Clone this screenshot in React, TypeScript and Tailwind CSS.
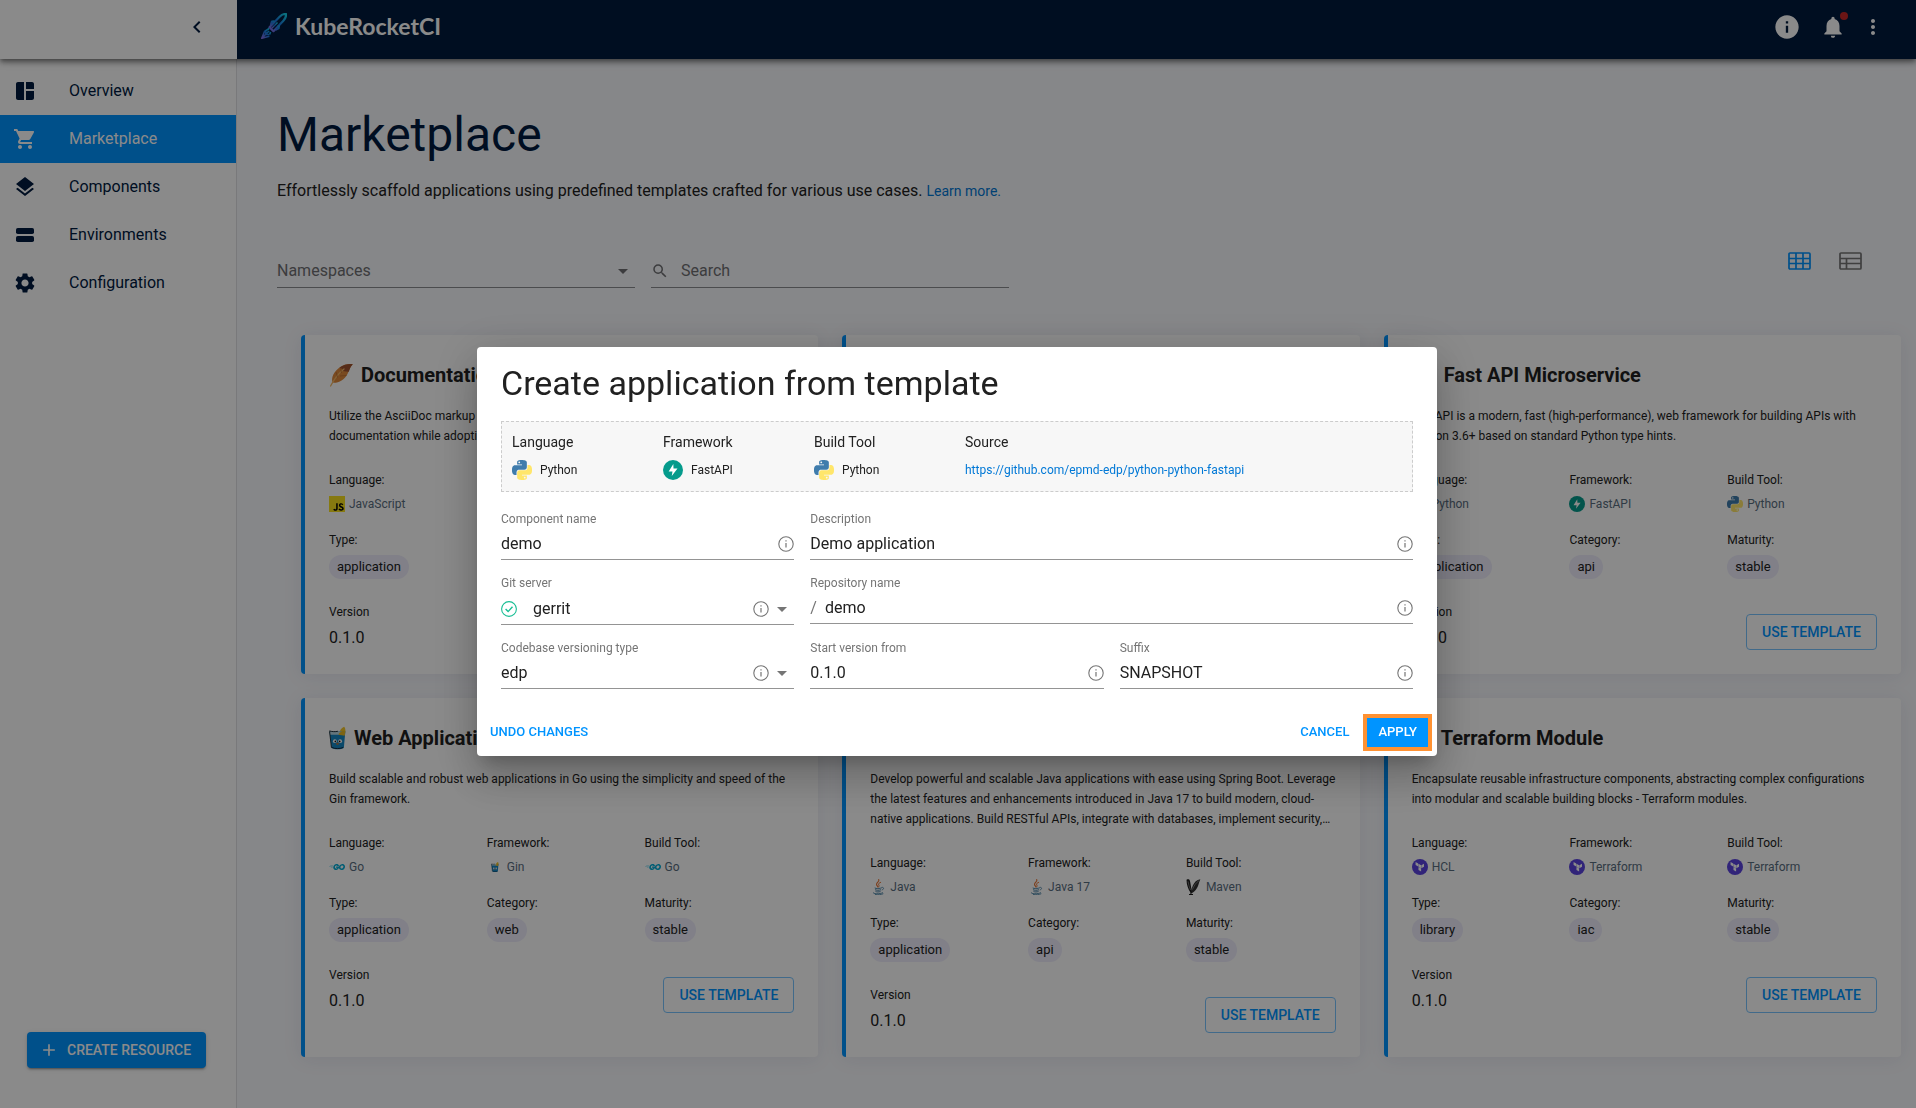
import React from 'react';
import {
  MdAdd,
  MdArrowDropDown,
  MdChevronLeft,
  MdInfo,
  MdLayers,
  MdMoreVert,
  MdNotifications,
  MdSearch,
  MdSettings,
  MdShoppingCart,
  MdSpaceDashboard,
} from 'react-icons/md';
import { SiGo, SiJavascript, SiTerraform } from 'react-icons/si';

/* ---------- drawings ---------- */

const PYTHON_HALF =
  'M14.25.18l.9.2.73.26.59.3.45.32.34.34.25.34.16.33.1.3.04.26.02.2-.01.13V8.5l-.05.63-.13.55-.21.46-.26.38-.3.31-.33.25-.35.19-.35.14-.33.1-.3.07-.26.04-.21.02H8.77l-.69.05-.59.14-.5.22-.41.27-.33.32-.27.35-.2.36-.15.37-.1.35-.07.32-.04.27-.02.21v3.06H3.17l-.21-.03-.28-.07-.32-.12-.35-.18-.36-.26-.36-.36-.35-.46-.32-.59-.28-.73-.21-.88-.14-1.05-.05-1.23.06-1.22.16-1.04.24-.87.32-.71.36-.57.4-.44.42-.33.42-.24.4-.16.36-.1.32-.05.24-.01h.16l.06.01h8.16v-.83H6.18l-.01-2.75-.02-.37.05-.34.11-.31.17-.28.25-.26.31-.23.38-.2.44-.18.51-.15.58-.12.64-.1.71-.06.77-.04.84-.02 1.27.05zm-6.3 1.98l-.23.33-.08.41.08.41.23.34.33.22.41.09.41-.09.33-.22.23-.34.08-.41-.08-.41-.23-.33-.33-.22-.41-.09-.41.09z';

type IconProps = { className?: string };

function PythonIcon({ className = 'size-4' }: IconProps) {
  return (
    <svg viewBox="0 0 24 24" className={className} aria-hidden="true">
      <path d={PYTHON_HALF} fill="#3f7cac" />
      <path d={PYTHON_HALF} fill="#ffe66b" transform="rotate(180 12 12)" />
    </svg>
  );
}

function FastApiIcon({ className = 'size-4' }: IconProps) {
  return (
    <svg viewBox="0 0 24 24" className={className} aria-hidden="true">
      <circle cx="12" cy="12" r="12" fill="#059b8c" />
      <path d="M12.4 4.8 6.8 13.8h4.6l-.9 5.4 6.9-9H12.6z" fill="#fff" />
    </svg>
  );
}

function TerraformIcon({ className = 'size-4' }: IconProps) {
  return (
    <span className={`${className} flex items-center justify-center rounded-full bg-[#5b44e0] text-white`}>
      <SiTerraform className="size-3/5" />
    </span>
  );
}

function JavaScriptIcon({ className = 'size-4' }: IconProps) {
  return (
    <span className={`${className} flex bg-black text-[#f7df1e]`}>
      <SiJavascript className="size-full" />
    </span>
  );
}

function GoIcon({ className = 'size-4' }: IconProps) {
  return <SiGo className={`${className} text-[#00acd7]`} />;
}

function JavaIcon({ className = 'size-4' }: IconProps) {
  return (
    <svg viewBox="0 0 24 24" className={className} fill="none" strokeLinecap="round" aria-hidden="true">
      <path d="M13 1c2 3-4.500 4.600-3 8 .4 1 1.500 1.800 2 3" stroke="#e76f2c" strokeWidth="1.600" />
      <path d="M16 5c-2.500 1-4 2.200-2.800 4 .6 1 .5 2-.4 3" stroke="#e76f2c" strokeWidth="1.400" />
      <path d="M7 13.500c-1.500.8 7 1.300 10 0M8 16.300c1.500.9 5.500.9 8 0M8.800 18.900c1.500.8 4.500.7 6.400 0" stroke="#4f86a8" strokeWidth="1.500" />
      <path d="M18 12.500c3-.8 3.600 2.800.2 4" stroke="#4f86a8" strokeWidth="1.300" />
      <path d="M5 20.500c-3 1.500 10 2.600 14 .2M8 23.300c4 .6 9 .2 11.500-1" stroke="#4f86a8" strokeWidth="1.300" />
    </svg>
  );
}

function MavenIcon({ className = 'size-4' }: IconProps) {
  return (
    <svg viewBox="0 0 24 24" className={className} aria-hidden="true">
      <path d="M.8 1.200C3 0 5 .4 5.800 2.500c1.200 4 1.400 8.500 2.600 13.500L6.800 20.500C3 15 .8 8 .8 1.200z" fill="#1c1c1c" />
      <path d="M21.500.4C16 1 12.500 5 10.500 9.500c-1.200 3-2.300 6-3.500 9.500l1 2.500c5-2 9-7.500 10.500-12.500 1-3 1.800-6 3-8.600z" fill="#303030" />
      <path d="M9.500 16C12 10 15 5.500 19.500 2.500M3 3.500c.6 4.500 2 8.500 3.800 13" stroke="#9a9a9a" strokeWidth="1" fill="none" />
      <path d="M7.400 18v5.300M4.500 23.300h6" stroke="#1c1c1c" strokeWidth="1.600" fill="none" />
    </svg>
  );
}

function GinIcon({ className = 'size-4' }: IconProps) {
  return (
    <svg viewBox="0 0 18 24" className={className} aria-hidden="true">
      <path d="M11 6.500C11.500 3 13.500 1 16 0c1.600 1.500 1.800 5 .8 7.500z" fill="#f3c62b" />
      <path d="M.5 5h16.800l-1.600 17.500c-3 1.800-10 1.800-13 0z" fill="#1687c4" />
      <path d="M.5 5h16.800l-.4 3.500H.9z" fill="#b9d9e6" />
      <path d="M.4 4.500c3 .9 6 1 9 .4M.6 5l2 17.300" stroke="#1d2b33" strokeWidth="1" fill="none" />
      <path d="M10 8.500C11 6 14 4 17.200 4.500l-.5 5z" fill="#e8b923" />
      <circle cx="6.200" cy="15.400" r="2" fill="#fff" />
      <circle cx="11.800" cy="15.400" r="2" fill="#fff" />
      <circle cx="6.700" cy="15.600" r=".9" fill="#111" />
      <circle cx="11.300" cy="15.600" r=".9" fill="#111" />
      <ellipse cx="9" cy="18.200" rx="1.600" ry="1.100" fill="#a3744a" />
      <path d="M3 22c3 1.600 9 1.600 12 0" stroke="#123" strokeWidth="1" fill="none" />
    </svg>
  );
}

function GinSmallIcon() {
  return (
    <span className="flex size-4 items-center justify-center">
      <GinIcon className="h-2.5 w-2" />
    </span>
  );
}

function FeatherIcon({ className = 'size-4' }: IconProps) {
  return (
    <svg viewBox="0 0 24 24" className={className} aria-hidden="true">
      <path d="M23.800 1.200C21 .4 15 1 10.500 4.500 4.500 9 2.600 14 3.200 18.500l1.300 1.300C10 20 15.500 16.500 18.500 11c1.800-3.200 2.200-6.800 5.300-9.800z" fill="#e08a3c" />
      <path d="M23.800 1.200C21 .4 15 1 10.500 4.500l3.200 1.700-1 1.600 3.800.6 3.300.4c1-2.800 1.700-5.300 4-7.600z" fill="#a0522f" />
      <path d="M15 6C10 10 6 14.500 1.600 23" stroke="#f1b868" strokeWidth="1.300" fill="none" strokeLinecap="round" />
      <path d="M11.500 5l1 5M7 9l1.600 5.500M17.500 12.500l-6.500.5" stroke="#b8692f" strokeWidth=".7" fill="none" />
    </svg>
  );
}

function RocketLogo() {
  return (
    <svg viewBox="0 0 26 26" className="size-[26px]" aria-hidden="true">
      <defs>
        <linearGradient id="rocket" x1="1" y1="0" x2="0" y2="1">
          <stop offset="0" stopColor="#12d3ea" />
          <stop offset=".5" stopColor="#1d78e0" />
          <stop offset="1" stopColor="#8b6fe8" />
        </linearGradient>
      </defs>
      <g stroke="url(#rocket)" fill="none" strokeLinejoin="round">
        <path d="M25 1c.3 2.600-.6 4.600-2.600 6.700L12.500 18.200l-4-4L18.600 3.800C20.600 1.700 22.600.8 25 1z" strokeWidth="2.200" />
        <path d="M16.500 9.500l-5.700 5.800" strokeWidth="1.500" />
        <path d="M13.500 8.500l-2.500.2-1 3.300M17.700 12.500l-.2 2.700-3 1.500" strokeWidth="2.400" />
        <path d="M8.200 15.500l-4.700 3L.8 25.200l7.600-2M9.500 19l-.8 2.600M1.500 24.500l6.500-6.500M4.800 18.500v3h3.500" strokeWidth="1.600" />
      </g>
    </svg>
  );
}

function EnvironmentsIcon({ className }: IconProps) {
  return (
    <svg viewBox="0 0 24 24" className={className} fill="currentColor" aria-hidden="true">
      <rect x="3" y="5" width="18" height="6" rx="1.800" />
      <rect x="3" y="13" width="18" height="6" rx="1.800" />
    </svg>
  );
}

function InfoOutline() {
  return (
    <svg viewBox="0 0 16 16" className="size-4 shrink-0 text-[#757575]" fill="none" stroke="currentColor" role="img" aria-label="Info">
      <circle cx="8" cy="8" r="7.200" strokeWidth="1.100" />
      <path d="M8 7v4.600M8 4.300v1.300" strokeWidth="1.200" />
    </svg>
  );
}

function CheckOutline() {
  return (
    <svg viewBox="0 0 16 16" className="size-4 shrink-0 text-[#18be94]" fill="none" stroke="currentColor" role="img" aria-label="Connected">
      <circle cx="8" cy="8" r="7.400" strokeWidth="1.100" />
      <path d="M4.600 8l2.500 2.600 4.400-4.800" strokeWidth="1.400" />
    </svg>
  );
}

function GridViewIcon() {
  return (
    <svg viewBox="0 0 23 18" className="h-[18px] w-[23px]" fill="none" stroke="currentColor" strokeWidth="1.700" aria-hidden="true">
      <rect x="1" y="1" width="21" height="16" rx="1" />
      <path d="M1 6.500h21M1 11.500h21M8 1v16M15 1v16" />
    </svg>
  );
}

function ListViewIcon() {
  return (
    <svg viewBox="0 0 23 18" className="h-[18px] w-[23px]" fill="none" stroke="currentColor" strokeWidth="1.700" aria-hidden="true">
      <rect x="1" y="1" width="21" height="16" rx="1" />
      <path d="M1 6.500h21M1 11.500h21M7.500 6.500V17" />
    </svg>
  );
}

/* ---------- page chrome ---------- */

function TopBar() {
  return (
    <header className="relative z-10 flex h-[59px] shrink-0 bg-white shadow-[0_2px_4px_-1px_rgba(0,0,0,0.3),0_4px_5px_rgba(0,0,0,0.24),0_1px_10px_rgba(0,0,0,0.22)]">
      <div className="flex w-[237px] shrink-0 items-center justify-end pr-7 pb-1.5 text-[#001a3f]">
        <button type="button" aria-label="Collapse menu">
          <MdChevronLeft className="size-6" />
        </button>
      </div>
      <div className="flex flex-1 items-center justify-between bg-[#001a3d] pr-[31px] pb-1.5 pl-6">
        <a href="#home" className="flex items-center gap-2 pb-0.5 font-['Lato'] text-[23px] leading-7 font-bold text-white">
          <RocketLogo />
          KubeRocketCI
        </a>
        <div className="flex items-center text-white">
          <button type="button" aria-label="Information" className="mr-[19px]">
            <MdInfo className="size-7" />
          </button>
          <button type="button" aria-label="Notifications" className="relative mr-[15px]">
            <MdNotifications className="size-[26px]" />
            <span className="absolute -top-0.5 -right-0.5 size-2 rounded-full bg-[#c62828]" />
          </button>
          <button type="button" aria-label="More">
            <MdMoreVert className="size-6" />
          </button>
        </div>
      </div>
    </header>
  );
}

const navItems = [
  { label: 'Overview', Icon: MdSpaceDashboard },
  { label: 'Marketplace', Icon: MdShoppingCart, active: true },
  { label: 'Components', Icon: MdLayers },
  { label: 'Environments', Icon: EnvironmentsIcon },
  { label: 'Configuration', Icon: MdSettings },
];

function Sidebar() {
  return (
    <aside className="flex w-[237px] shrink-0 flex-col justify-between border-r border-[#e0e0e4] bg-white pt-2 pb-10">
      <nav>
        {navItems.map(({ label, Icon, active }) => (
          <a
            key={label}
            href={`#${label.toLowerCase()}`}
            aria-current={active ? 'page' : undefined}
            className={`flex h-12 items-center gap-8 pl-[13px] text-base ${active ? 'bg-[#0094ff] text-white' : 'text-[#001a3f]'}`}
          >
            <Icon className="size-6" />
            {label}
          </a>
        ))}
      </nav>
      <button
        type="button"
        className="mr-[30px] ml-[27px] flex h-9 items-center gap-2 rounded bg-[#0094ff] pl-3 text-sm font-medium text-white shadow-[0_3px_1px_-2px_rgba(0,0,0,0.2),0_2px_2px_rgba(0,0,0,0.14),0_1px_5px_rgba(0,0,0,0.12)]"
      >
        <MdAdd className="size-5" />
        CREATE RESOURCE
      </button>
    </aside>
  );
}

/* ---------- template cards ---------- */

type Tech = { name: string; Icon: (p: IconProps) => React.ReactElement };

type Template = {
  title: string;
  icon: React.ReactNode;
  description: string;
  language: Tech;
  framework: Tech;
  buildTool: Tech;
  type: string;
  category: string;
};

const python: Tech = { name: 'Python', Icon: PythonIcon };
const go: Tech = { name: 'Go', Icon: GoIcon };
const terraform: Tech = { name: 'Terraform', Icon: TerraformIcon };

const templates: Template[] = [
  {
    title: 'Documentation as Code',
    icon: <FeatherIcon className="size-6" />,
    description:
      'Utilize the AsciiDoc markup language for efficient and well structured project documentation while adopting the Docs as Code approach.',
    language: { name: 'JavaScript', Icon: JavaScriptIcon },
    framework: { name: 'Antora', Icon: JavaScriptIcon },
    buildTool: { name: 'NPM', Icon: JavaScriptIcon },
    type: 'application',
    category: 'docs',
  },
  {
    title: 'Flask Microservice',
    icon: <PythonIcon className="size-6" />,
    description: 'Build lightweight and flexible web services in Python with the Flask framework.',
    language: python,
    framework: { name: 'Flask', Icon: PythonIcon },
    buildTool: python,
    type: 'application',
    category: 'web',
  },
  {
    title: 'Fast API Microservice',
    icon: <FastApiIcon className="size-6" />,
    description:
      'FastAPI is a modern, fast (high-performance), web framework for building APIs with Python 3.6+ based on standard Python type hints.',
    language: python,
    framework: { name: 'FastAPI', Icon: FastApiIcon },
    buildTool: python,
    type: 'application',
    category: 'api',
  },
  {
    title: 'Web Application',
    icon: <GinIcon className="h-6 w-[17px]" />,
    description: 'Build scalable and robust web applications in Go using the simplicity and speed of the Gin framework.',
    language: go,
    framework: { name: 'Gin', Icon: GinSmallIcon },
    buildTool: go,
    type: 'application',
    category: 'web',
  },
  {
    title: 'Spring Boot Microservice',
    icon: <JavaIcon className="size-6" />,
    description:
      'Develop powerful and scalable Java applications with ease using Spring Boot. Leverage the latest features and enhancements introduced in Java 17 to build modern, cloud-native applications. Build RESTful APIs, integrate with databases, implement security, microservices and more.',
    language: { name: 'Java', Icon: JavaIcon },
    framework: { name: 'Java 17', Icon: JavaIcon },
    buildTool: { name: 'Maven', Icon: MavenIcon },
    type: 'application',
    category: 'api',
  },
  {
    title: 'Terraform Module',
    icon: <TerraformIcon className="size-[21px]" />,
    description:
      'Encapsulate reusable infrastructure components, abstracting complex configurations into modular and scalable building blocks - Terraform modules.',
    language: { name: 'HCL', Icon: TerraformIcon },
    framework: terraform,
    buildTool: terraform,
    type: 'library',
    category: 'iac',
  },
];

function TechItem({ label, tech }: { label: string; tech: Tech }) {
  return (
    <div>
      <dt className="text-[#212121]">{label}:</dt>
      <dd className="mt-1 flex h-5 items-center gap-1 text-[#596d80]">
        <tech.Icon className="size-4" />
        {tech.name}
      </dd>
    </div>
  );
}

function ChipItem({ label, value }: { label: string; value: string }) {
  return (
    <div>
      <dt className="text-[#212121]">{label}:</dt>
      <dd className="mt-[5px] flex">
        <span className="rounded-full bg-[#eeedfc] px-2 text-[13px] leading-6 text-[#212121]">{value}</span>
      </dd>
    </div>
  );
}

function TemplateCard({ template }: { template: Template }) {
  return (
    <article className="rounded border-l-4 border-[#0094ff] bg-white p-6 text-xs leading-5 text-[#212121] shadow-[0_2px_20px_rgba(40,40,80,0.08)]">
      <h2 className="mb-[15px] flex h-8 items-center gap-2 text-xl font-bold">
        {template.icon}
        {template.title}
      </h2>
      <p className="line-clamp-3">{template.description}</p>
      <dl className="mt-6 grid grid-cols-3 gap-x-2 gap-y-4">
        <TechItem label="Language" tech={template.language} />
        <TechItem label="Framework" tech={template.framework} />
        <TechItem label="Build Tool" tech={template.buildTool} />
        <ChipItem label="Type" value={template.type} />
        <ChipItem label="Category" value={template.category} />
        <ChipItem label="Maturity" value="stable" />
      </dl>
      <div className="mt-[23px] flex items-end justify-between">
        <div>
          <p>Version</p>
          <p className="mt-1 text-base">0.1.0</p>
        </div>
        <button
          type="button"
          className="h-9 rounded border border-[#79c4ff] px-[15px] text-sm font-medium text-[#0094ff]"
        >
          USE TEMPLATE
        </button>
      </div>
    </article>
  );
}

function Marketplace() {
  return (
    <main className="flex-1 bg-[#f8f9fd] pt-12 pb-[50px]">
      <div className="px-10">
        <h1 className="text-5xl leading-14 text-[#001a3f]">Marketplace</h1>
        <p className="mt-4 text-base text-[#212121]">
          Effortlessly scaffold applications using predefined templates crafted for various use cases.{' '}
          <a href="#learn" className="text-sm text-[#0078d6]">
            Learn more.
          </a>
        </p>
        <div className="mt-[37px] flex h-12 justify-between">
          <div className="flex items-end gap-4">
            <div className="flex w-[358px] items-center border-b border-[#8b8c90] pb-1 text-[#6f7073]">
              <select aria-label="Namespaces" className="flex-1 appearance-none bg-transparent text-base outline-none">
                <option>Namespaces</option>
              </select>
              <MdArrowDropDown className="pointer-events-none size-6" />
            </div>
            <div className="flex w-[358px] items-center gap-3 border-b border-[#8b8c90] pb-1 text-[#6f7073]">
              <MdSearch className="size-[18px]" />
              <input
                type="search"
                aria-label="Search"
                placeholder="Search"
                className="h-6 min-w-0 flex-1 bg-transparent text-base outline-none placeholder:text-[#6f7073]"
              />
            </div>
          </div>
          <div className="flex h-[42px]">
            <button type="button" aria-label="Grid view" className="flex w-[51px] items-center justify-center text-[#0094ff]">
              <GridViewIcon />
            </button>
            <button type="button" aria-label="List view" className="flex w-[51px] items-center justify-center text-[#757575]">
              <ListViewIcon />
            </button>
          </div>
        </div>
      </div>
      <div className="mt-[47px] grid grid-cols-3 gap-6 pr-[15px] pl-16">
        {templates.map((template) => (
          <TemplateCard key={template.title} template={template} />
        ))}
      </div>
    </main>
  );
}

/* ---------- dialog ---------- */

type FieldProps = {
  id: string;
  label: string;
  value: string;
  className?: string;
  prefix?: React.ReactNode;
};

function TextField({ id, label, value, className = '', prefix }: FieldProps) {
  return (
    <div className={className}>
      <label htmlFor={id} className="block text-xs text-[#757575]">
        {label}
      </label>
      <div className="flex items-center gap-2 border-b border-[#949494] pt-[5px] pb-[3px]">
        {prefix}
        <input id={id} type="text" defaultValue={value} className="h-6 min-w-0 flex-1 bg-transparent text-base outline-none" />
        <InfoOutline />
      </div>
    </div>
  );
}

function SelectField({ id, label, value, prefix }: FieldProps) {
  return (
    <div>
      <label htmlFor={id} className="block text-xs text-[#757575]">
        {label}
      </label>
      <div className="flex items-center border-b border-[#949494] pt-[5px] pb-[3px]">
        {prefix}
        <select id={id} className="h-6 flex-1 appearance-none bg-transparent text-base outline-none">
          <option>{value}</option>
        </select>
        <InfoOutline />
        <MdArrowDropDown className="pointer-events-none ml-px size-6 text-[#757575]" />
      </div>
    </div>
  );
}

function SummaryItem({ label, tech }: { label: string; tech: Tech }) {
  return (
    <div>
      <dt className="text-sm">{label}</dt>
      <dd className="mt-2 flex items-center gap-2 text-xs leading-5">
        <tech.Icon className="size-5" />
        {tech.name}
      </dd>
    </div>
  );
}

function CreateDialog() {
  return (
    <div className="fixed inset-0 z-20 flex items-center justify-center bg-black/46 pr-0.5 pb-[5px]">
      <div
        role="dialog"
        aria-modal="true"
        aria-labelledby="dialog-title"
        className="w-full max-w-[960px] rounded bg-white text-[#212121] shadow-[0_11px_15px_-7px_rgba(0,0,0,0.2),0_24px_38px_3px_rgba(0,0,0,0.14),0_9px_46px_8px_rgba(0,0,0,0.12)]"
      >
        <div className="px-6 pt-4">
          <h2 id="dialog-title" className="text-[34px] leading-10">
            Create application from template
          </h2>
          <dl className="mt-[18px] grid grid-cols-6 gap-4 border border-dashed border-[#cccccc] bg-[#f7f7f7] px-2.5 pt-2.5 pb-[11px]">
            <SummaryItem label="Language" tech={python} />
            <SummaryItem label="Framework" tech={{ name: 'FastAPI', Icon: FastApiIcon }} />
            <SummaryItem label="Build Tool" tech={python} />
            <div className="col-span-3">
              <dt className="text-sm">Source</dt>
              <dd className="mt-2 text-xs leading-5">
                <a href="https://github.com/epmd-edp/python-python-fastapi" className="text-[#0078d6]">
                  https://github.com/epmd-edp/python-python-fastapi
                </a>
              </dd>
            </div>
          </dl>
          <form className="mt-[19px] grid grid-cols-3 gap-x-4 gap-y-[15px]">
            <TextField id="component-name" label="Component name" value="demo" />
            <TextField id="description" label="Description" value="Demo application" className="col-span-2" />
            <SelectField
              id="git-server"
              label="Git server"
              value="gerrit"
              prefix={
                <span className="mr-4 flex h-[25px] items-center">
                  <CheckOutline />
                </span>
              }
            />
            <TextField
              id="repository-name"
              label="Repository name"
              value="demo"
              className="col-span-2"
              prefix={<span className="text-base text-[#757575]">/</span>}
            />
            <SelectField id="versioning" label="Codebase versioning type" value="edp" />
            <TextField id="start-version" label="Start version from" value="0.1.0" />
            <TextField id="suffix" label="Suffix" value="SNAPSHOT" />
          </form>
        </div>
        <div className="mt-[25px] flex items-center justify-between pr-[5px] pb-[5px] pl-[13px] text-[13px] font-medium">
          <button type="button" className="pb-0.5 text-[#0094ff]">
            UNDO CHANGES
          </button>
          <div className="flex items-center gap-3.5">
            <button type="button" className="pb-0.5 text-[#0094ff]">
              CANCEL
            </button>
            <button type="button" className="h-[37px] border-4 border-[#ff9233] bg-[#0094ff] px-[11px] pb-0.5 text-white">
              APPLY
            </button>
          </div>
        </div>
      </div>
    </div>
  );
}

export default function App() {
  return (
    <div className="flex min-h-screen flex-col font-['Roboto',sans-serif]">
      <TopBar />
      <div className="flex flex-1">
        <Sidebar />
        <Marketplace />
      </div>
      <CreateDialog />
    </div>
  );
}
